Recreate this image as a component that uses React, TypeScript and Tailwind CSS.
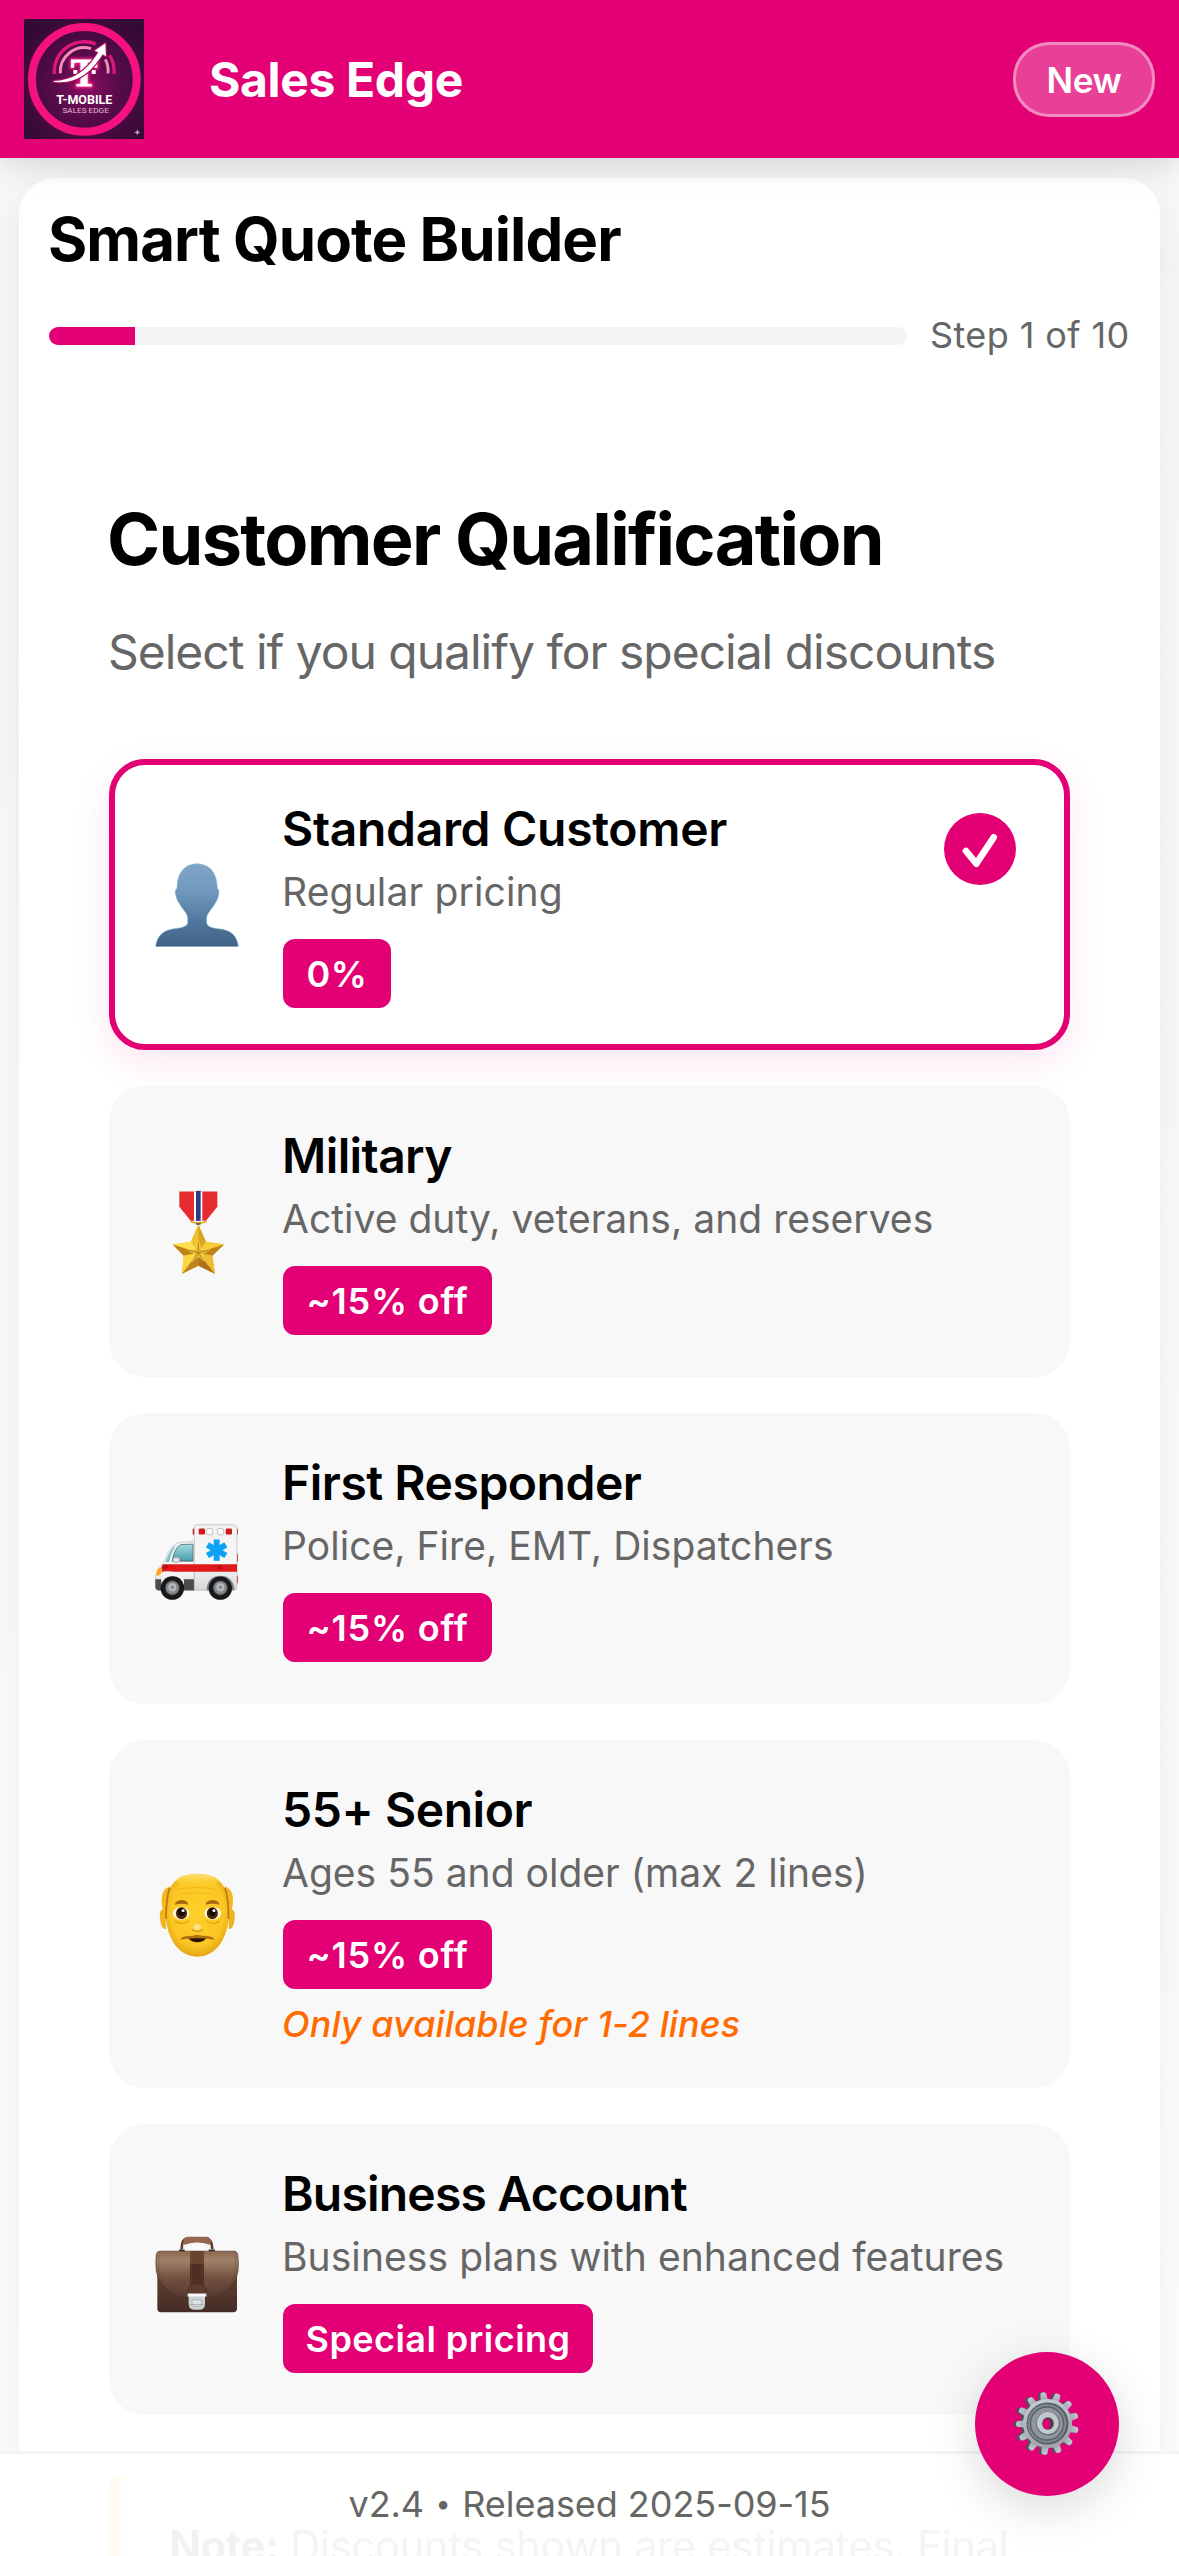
import type { ReactNode } from "react";

function Logo() {
  return (
    <svg viewBox="27 27 360 360" className="h-[120px] w-[120px] shrink-0">
      <defs>
        <radialGradient id="logoBg" cx="0.52" cy="0.56" r="0.62">
          <stop offset="0" stopColor="#8c0d62" />
          <stop offset="0.4" stopColor="#5a0b4b" />
          <stop offset="0.8" stopColor="#400a3c" />
          <stop offset="1" stopColor="#340a34" />
        </radialGradient>
        <filter id="glow" x="-40%" y="-40%" width="180%" height="180%">
          <feGaussianBlur stdDeviation="5" />
        </filter>
      </defs>
      <rect x="27" y="27" width="360" height="360" fill="url(#logoBg)" />
      <circle cx="208" cy="208" r="157" fill="none" stroke="#f5127f" strokeWidth="24" />
      <path d="M118 192 A90 90 0 0 1 242 102" fill="none" stroke="#e0177b" strokeWidth="10" />
      <path d="M136 190 A72 72 0 0 1 228 116" fill="none" stroke="#f78bb8" strokeWidth="9" />
      <path d="M284 136 A90 90 0 0 1 297 192" fill="none" stroke="#d8177b" strokeWidth="10" />
      <path d="M271 148 A72 72 0 0 1 279 190" fill="none" stroke="#f78bb8" strokeWidth="9" />
      <g fontFamily="'Liberation Serif', serif" fontWeight="700" fontSize="118" textAnchor="middle">
        <text x="207" y="227" fill="#ff1a8c" stroke="#ff1a8c" strokeWidth="12" filter="url(#glow)">T</text>
        <text x="207" y="227" fill="#ffffff" stroke="#ffffff" strokeWidth="3">T</text>
      </g>
      <rect x="175" y="180" width="12" height="12" fill="#fff" />
      <rect x="230" y="180" width="12" height="12" fill="#fff" />
      <path
        d="M116 213 C170 212 214 186 250 127 L239 122 L271 100 L273 139 L263 133 C224 194 180 224 116 215 Z"
        fill="#fff"
        stroke="#a80c5f"
        strokeWidth="7"
        paintOrder="stroke"
      />
      <text x="208" y="283" textAnchor="middle" fontFamily="Roboto, sans-serif" fontWeight="700" fontSize="38" textLength="168" lengthAdjust="spacingAndGlyphs" fill="#fff">
        T-MOBILE
      </text>
      <text x="212" y="310" textAnchor="middle" fontFamily="Roboto, sans-serif" fontSize="24" textLength="139" lengthAdjust="spacingAndGlyphs" fill="#e0bfd3">
        SALES EDGE
      </text>
      <path d="M367 359 L369 365 L375 367 L369 369 L367 375 L365 369 L359 367 L365 365 Z" fill="#c9b3c8" stroke="#c9b3c8" />
    </svg>
  );
}

function PersonIcon() {
  return (
    <svg viewBox="165 367.5 252 252" className="h-[84px] w-[84px]">
      <defs>
        <linearGradient id="person" x1="0" y1="0" x2="0" y2="1">
          <stop offset="0" stopColor="#7fa6c9" />
          <stop offset="0.35" stopColor="#6f98bc" />
          <stop offset="0.75" stopColor="#4d7299" />
          <stop offset="1" stopColor="#426387" />
        </linearGradient>
      </defs>
      <path
        d="M291 370 C327 370 352 396 352 444 C358 447 358 458 355 468 C352 478 349 484 345 489 C338 503 320 520 320 532 V546 C320 558 336 563 356 565 C392 568 411 585 415 617 H167 C171 585 191 568 226 564 C247 562 263 557 263 546 V532 C263 520 245 503 238 489 C234 484 231 478 228 468 C225 458 224 447 231 444 C231 396 255 370 291 370 Z"
        fill="url(#person)"
        stroke="#8cc3da"
        strokeWidth="1.5"
      />
      <path d="M168 616 H414" stroke="#36577c" strokeWidth="3" />
    </svg>
  );
}

function MedalIcon() {
  return (
    <svg viewBox="45 88.5 252 252" className="h-[84px] w-[84px]">
      <defs>
        <linearGradient id="medal" x1="0" y1="0" x2="1" y2="1">
          <stop offset="0" stopColor="#f6d02c" />
          <stop offset="1" stopColor="#d49a1c" />
        </linearGradient>
      </defs>
      <path d="M118 93 H232 V139 L198 181 H152 L118 139 Z" fill="#e62b2e" />
      <path d="M162 93 H187 V181 H162 Z" fill="#fff" />
      <path d="M168 91 H182 V181 H168 Z" fill="#2e3c82" />
      <path d="M150 180 Q175 189 201 180 L199 186 Q175 194 152 186 Z" fill="#e0aa2c" />
      <path d="M167 188 H183 L181 193 H169 Z" fill="#57452a" />
      <path d="M175 192 L198 244 L252 252 L217 286 L225 340 L175 316 L126 340 L131 286 L98 252 L153 244 Z" fill="url(#medal)" />
      <path d="M175 192 L153 244 L175 277 Z" fill="#eec42d" />
      <path d="M175 192 L198 244 L175 277 Z" fill="#d9a522" />
      <path d="M98 252 L153 244 L175 277 Z" fill="#ffe04a" />
      <path d="M98 252 L131 286 L175 277 Z" fill="#bd8418" />
      <path d="M252 252 L198 244 L175 277 Z" fill="#f5cd36" />
      <path d="M252 252 L217 286 L175 277 Z" fill="#c08419" />
      <path d="M126 340 L131 286 L175 277 Z" fill="#f9d73d" />
      <path d="M126 340 L175 316 V277 Z" fill="#be8420" />
      <path d="M225 340 L175 316 V277 Z" fill="#b0731c" />
      <path d="M225 340 L217 286 L175 277 Z" fill="#eebf30" />
      <path d="M175 240 L183 266 L208 268 L186 280 L192 302 L175 288 L158 302 L164 280 L143 268 L167 266 Z" fill="#e9b92b" stroke="#fbe36a" strokeWidth="2" />
      <path d="M175 243 V277 L206 268 M175 277 L190 300 M175 277 L160 300 M175 277 L145 268" stroke="#996515" strokeWidth="2" fill="none" />
    </svg>
  );
}

function Wheel({ cx }: { cx: number }) {
  return (
    <g>
      <circle cx={cx} cy="263" r="35" fill="#171819" />
      <circle cx={cx} cy="262" r="23" fill="#3b3d3f" />
      <circle cx={cx} cy="262" r="20" fill="#85888c" />
      <circle cx={cx} cy="260" r="12" fill="#b9bcc0" />
      <circle cx={cx} cy="260" r="6" fill="#8c8f93" />
    </g>
  );
}

function AmbulanceIcon() {
  return (
    <svg viewBox="45 49.5 252 252" className="h-[84px] w-[84px]">
      <defs>
        <linearGradient id="glass" x1="0" y1="0" x2="0" y2="1">
          <stop offset="0" stopColor="#a5dbe3" />
          <stop offset="1" stopColor="#4a9aa9" />
        </linearGradient>
        <linearGradient id="body" x1="0" y1="0" x2="0" y2="1">
          <stop offset="0" stopColor="#f3f3f3" />
          <stop offset="0.6" stopColor="#f7f7f8" />
          <stop offset="1" stopColor="#d6d7d9" />
        </linearGradient>
      </defs>
      <g fill="#d01d20">
        <rect x="158" y="84" width="8" height="19" rx="3" />
        <rect x="286" y="84" width="8" height="19" rx="3" />
        <rect x="286" y="160" width="8" height="24" rx="3" />
        <rect x="286" y="226" width="8" height="22" rx="3" />
      </g>
      <path d="M46 236 C48 208 60 194 72 186 C82 158 96 130 118 126 L163 123 V268 H60 Q46 268 46 256 Z" fill="url(#body)" stroke="#b8babc" strokeWidth="2" />
      <path d="M96 182 C101 155 112 133 126 132 L159 131 V182 Z" fill="url(#glass)" stroke="#3f5256" strokeWidth="2" />
      <path d="M76 186 C85 160 95 142 107 134 C98 150 91 166 88 184 Z" fill="#79c2cf" />
      <path d="M46 236 H163 V270 H58 Q46 270 46 258 Z" fill="#4b4c4e" />
      <path d="M163 82 Q163 73 173 73 H281 Q291 73 291 82 V258 Q291 269 280 269 H163 Z" fill="url(#body)" stroke="#b3b5b8" strokeWidth="2" />
      <path d="M200 262 Q206 226 242 226 Q275 226 283 262 V269 H200 Z" fill="#7e8084" />
      <path d="M68 191 H291 V214 H104 Q76 210 62 216 Q62 200 68 191 Z" fill="#e0181b" />
      <path d="M64 236 Q72 218 98 219 Q124 220 132 240 V258 H64 Z" fill="#f4f4f5" />
      <path d="M66 252 Q72 227 98 227 Q124 227 132 254 V262 H66 Z" fill="#3a3a3c" />
      <path d="M48 224 Q50 204 60 200 Q68 205 65 216 Q60 226 50 227 Z" fill="#ffa512" stroke="#e9e0c8" strokeWidth="2" />
      <ellipse cx="77" cy="199" rx="8" ry="6" fill="#b31114" />
      <rect x="232" y="196" width="15" height="10" rx="3" fill="#b31114" />
      <ellipse cx="109" cy="178" rx="11" ry="8" fill="#e2e3e5" stroke="#8d9093" strokeWidth="2" />
      <rect x="176" y="84" width="19" height="18" rx="4" fill="#cf1a1d" />
      <rect x="199" y="84" width="19" height="19" rx="5" fill="#fafafa" stroke="#a7a9ab" strokeWidth="2" />
      <rect x="232" y="84" width="19" height="19" rx="5" fill="#fafafa" stroke="#a7a9ab" strokeWidth="2" />
      <rect x="257" y="84" width="19" height="18" rx="4" fill="#cf1a1d" />
      <g fill="#0da2f6">
        <rect x="221" y="117" width="18" height="64" />
        <rect x="221" y="117" width="18" height="64" transform="rotate(60 230 149)" />
        <rect x="221" y="117" width="18" height="64" transform="rotate(-60 230 149)" />
      </g>
      <Wheel cx={97} />
      <Wheel cx={241} />
    </svg>
  );
}

function SeniorIcon() {
  return (
    <svg viewBox="38 66 212.4 252" preserveAspectRatio="none" className="h-[84px] w-[84px] overflow-visible">
      <defs>
        <radialGradient id="face" cx="0.5" cy="0.45" r="0.6">
          <stop offset="0" stopColor="#fdd02a" />
          <stop offset="0.7" stopColor="#fbc623" />
          <stop offset="1" stopColor="#dc9b10" />
        </radialGradient>
        <linearGradient id="shine" x1="0" y1="0" x2="0" y2="1">
          <stop offset="0" stopColor="#ffe27a" />
          <stop offset="1" stopColor="#fdd02a" stopOpacity="0" />
        </linearGradient>
      </defs>
      <path d="M64 178 Q49 176 50 196 Q52 240 66 237 Z" fill="#f0b31e" />
      <path d="M226 178 Q241 176 240 196 Q238 240 224 237 Z" fill="#f0b31e" />
      <path d="M145 71 C197 71 226 108 226 178 C226 258 196 320 145 320 C94 320 64 258 64 178 C64 108 93 71 145 71 Z" fill="url(#face)" />
      <ellipse cx="145" cy="92" rx="54" ry="20" fill="url(#shine)" />
      <path d="M75 109 C52 120 52 150 58 180 L66 208 C66 170 68 140 76 112 Z" fill="#f3b81d" />
      <path d="M215 109 C238 120 238 150 232 180 L224 208 C224 170 222 140 214 112 Z" fill="#f3b81d" />
      <path d="M75 114 C67 140 66 170 66 206 M215 114 C223 140 224 170 224 206" fill="none" stroke="#b87312" strokeWidth="4" />
      <path d="M98 118 Q145 107 192 118 M104 132 Q145 124 186 132" fill="none" stroke="#eab21c" strokeWidth="2" />
      <path d="M88 164 Q90 150 108 150 Q120 151 122 164 Q106 158 88 164 Z M166 164 Q168 151 182 150 Q199 150 201 164 Q184 158 166 164 Z" fill="#a8690f" />
      <ellipse cx="104" cy="190" rx="21" ry="19" fill="#fff8dc" />
      <ellipse cx="184" cy="190" rx="21" ry="19" fill="#fff8dc" />
      <ellipse cx="105" cy="190" rx="14" ry="18" fill="#4a2608" />
      <ellipse cx="183" cy="190" rx="14" ry="18" fill="#4a2608" />
      <ellipse cx="105" cy="186" rx="9" ry="12" fill="#160b04" />
      <ellipse cx="183" cy="186" rx="9" ry="12" fill="#160b04" />
      <circle cx="109" cy="182" r="4" fill="#fff" />
      <circle cx="187" cy="182" r="4" fill="#fff" />
      <path d="M88 213 Q106 228 124 212 M166 212 Q184 228 202 213" fill="none" stroke="#dfa017" strokeWidth="3" />
      <ellipse cx="145" cy="231" rx="10" ry="9" fill="#ffe27f" />
      <path d="M131 238 Q145 251 159 238" fill="none" stroke="#cf8e14" strokeWidth="3" />
      <path d="M122 264 H168 Q160 277 145 277 Q130 277 122 264 Z" fill="#2c1206" />
      <path d="M102 269 Q103 260 120 258 Q134 258 145 254 Q156 258 170 258 Q187 260 188 269 Q166 265 145 265 Q124 265 102 269 Z" fill="#b0700f" />
    </svg>
  );
}

function BriefcaseIcon() {
  return (
    <svg viewBox="45 82.5 252 252" className="h-[84px] w-[84px] overflow-visible">
      <defs>
        <linearGradient id="flap" x1="0" y1="0" x2="0" y2="1">
          <stop offset="0" stopColor="#8d6a52" />
          <stop offset="0.2" stopColor="#a08068" />
          <stop offset="0.6" stopColor="#70503f" />
          <stop offset="1" stopColor="#583a2f" />
        </linearGradient>
        <linearGradient id="base" x1="0" y1="0" x2="0" y2="1">
          <stop offset="0" stopColor="#6b4838" />
          <stop offset="1" stopColor="#452c26" />
        </linearGradient>
      </defs>
      <path d="M125 146 Q125 116 141 114 H199 Q216 116 217 146" fill="none" stroke="#5e3b2c" strokeWidth="8" />
      <path d="M131 124 Q131 109 145 109 H198 Q212 109 213 124 Q214 135 207 132 Q171 120 137 132 Q130 135 131 124 Z" fill="#96674e" />
      <path d="M117 147 H134 V153 H117 Z M206 147 H225 V153 H206 Z" fill="#3b2b25" />
      <path d="M52 180 H291 V324 Q291 335 280 335 H63 Q52 335 52 324 Z" fill="url(#base)" />
      <path d="M60 152 H282 Q292 152 293 162 Q297 185 294 212 C288 250 252 290 192 290 H150 C90 290 56 250 49 212 Q46 185 49 162 Q50 152 60 152 Z" fill="url(#flap)" stroke="#4d342b" strokeWidth="2" />
      <path d="M56 164 V214 C64 250 98 281 150 283 M286 164 V214 C278 250 246 281 196 283" fill="none" stroke="#4e3429" strokeWidth="1.5" strokeDasharray="4 3" />
      <path d="M150 152 H192 V254 H150 Z" fill="#4d3023" />
      <path d="M150 152 H192 V190 H150 Z" fill="#69432e" />
      <path d="M155 153 V250 M187 153 V250" stroke="#9c7560" strokeWidth="1.2" strokeDasharray="3 3" />
      <path d="M144 280 V270 Q147 249 171 249 Q196 249 199 270 V280 Z" fill="#5d3b2e" stroke="#3c251e" strokeWidth="1.5" />
      <path d="M146 286 H195 V311 Q194 328 176 328 H165 Q147 328 146 311 Z" fill="#ced2d3" />
      <path d="M143 279 H199 V288 H143 Z" fill="#f6f8f8" />
      <rect x="156" y="298" width="29" height="19" rx="5" fill="#dfe2e3" stroke="#999da0" strokeWidth="2" />
      <path d="M148 312 H194" stroke="#9fa4a6" strokeWidth="2" />
    </svg>
  );
}

const TEETH = Array.from({ length: 13 }, (_, i) => (i * 360) / 13);

function GearIcon() {
  return (
    <svg viewBox="0 0 144 144" className="h-[144px] w-[144px]">
      <defs>
        <linearGradient id="gear" x1="0" y1="0" x2="0.3" y2="1">
          <stop offset="0" stopColor="#c6d0da" />
          <stop offset="1" stopColor="#a3a3ac" />
        </linearGradient>
      </defs>
      {[
        { dx: -2.5, fill: "#4d5358" },
        { dx: 0, fill: "url(#gear)" },
      ].map((layer) => (
        <g key={layer.dx} transform={`translate(${layer.dx} 0)`} fill={layer.fill}>
          {TEETH.map((a) => (
            <path key={a} d="M68.6 50 L69.7 41 Q72.5 39 75.3 41 L76.4 50 Z" transform={`rotate(${a - 8} 72.5 71.5)`} />
          ))}
          <circle cx="72.5" cy="71.5" r="24.5" />
        </g>
      ))}
      <circle cx="72.5" cy="71.5" r="21" fill="#555c62" />
      <circle cx="72" cy="71.5" r="19.5" fill="#7e868c" />
      <circle cx="72" cy="71.5" r="16.5" fill="#8f979d" stroke="#5b6268" strokeWidth="1.4" />
      <circle cx="73" cy="71.5" r="12" fill="#666d73" />
      <circle cx="72.8" cy="71" r="11" fill="#c3c8d0" />
      <ellipse cx="73" cy="71.5" rx="5.8" ry="6.2" fill="#4b4045" />
      <ellipse cx="71.6" cy="72" rx="3.6" ry="5.2" fill="#e20074" />
    </svg>
  );
}

type Option = {
  icon: ReactNode;
  title: string;
  titleClass: string;
  desc: string;
  descClass: string;
  badge: string;
  badgeClass: string;
  note?: string;
  selected?: boolean;
};

const options: Option[] = [
  {
    icon: <PersonIcon />,
    title: "Standard Customer",
    titleClass: "tracking-[-0.32px]",
    desc: "Regular pricing",
    descClass: "tracking-[0.15px]",
    badge: "0%",
    badgeClass: "w-[108px] tracking-[0.5px]",
    selected: true,
  },
  {
    icon: <MedalIcon />,
    title: "Military",
    titleClass: "tracking-[-0.6px]",
    desc: "Active duty, veterans, and reserves",
    descClass: "tracking-[0.03px]",
    badge: "~15% off",
    badgeClass: "w-[209px] tracking-[0.8px]",
  },
  {
    icon: <AmbulanceIcon />,
    title: "First Responder",
    titleClass: "tracking-[-0.48px]",
    desc: "Police, Fire, EMT, Dispatchers",
    descClass: "tracking-[0.04px]",
    badge: "~15% off",
    badgeClass: "w-[209px] tracking-[0.8px]",
  },
  {
    icon: <SeniorIcon />,
    title: "55+ Senior",
    titleClass: "tracking-[-0.45px]",
    desc: "Ages 55 and older (max 2 lines)",
    descClass: "tracking-[0.02px]",
    badge: "~15% off",
    badgeClass: "w-[209px] tracking-[0.8px]",
    note: "Only available for 1-2 lines",
  },
  {
    icon: <BriefcaseIcon />,
    title: "Business Account",
    titleClass: "tracking-[-0.8px]",
    desc: "Business plans with enhanced features",
    descClass: "tracking-[0.07px]",
    badge: "Special pricing",
    badgeClass: "w-[310px] tracking-[0.45px]",
  },
];

function OptionCard({ option }: { option: Option }) {
  return (
    <div
      className={
        option.selected
          ? "relative flex items-center rounded-[36px] border-[6px] border-[#e20074] bg-white pl-10 shadow-[0_12px_36px_rgba(226,0,116,0.1)]"
          : "relative flex items-center rounded-[36px] border-[6px] border-[#f8f8f8] bg-[#f8f8f8] pl-10"
      }
    >
      <div className="w-[84px] shrink-0">{option.icon}</div>
      <div className={option.note ? "ml-11 pt-[34px] pb-[34px]" : "ml-11 pt-[34px] pb-9"}>
        <div className={`-ml-px text-[48px] leading-[60px] font-semibold text-black ${option.titleClass}`}>{option.title}</div>
        <div className={`mt-[9px] -ml-px text-[39px] leading-[48px] whitespace-nowrap text-[#666666] ${option.descClass}`}>{option.desc}</div>
        <div
          className={`mt-[23px] flex h-[69px] items-center justify-center rounded-xl bg-[#e20074] pt-px text-[36px] font-[570] whitespace-nowrap text-white ${option.badgeClass}`}
        >
          {option.badge}
        </div>
        {option.note && (
          <div className="mt-[11px] -ml-px text-[36px] leading-[48px] font-medium tracking-[0.08px] text-[#ff6b00] italic">{option.note}</div>
        )}
      </div>
      {option.selected && (
        <div className="absolute top-12 right-12 h-[72px] w-[72px] rounded-full bg-[#e20074]">
          <svg viewBox="132 219 216 216" className="h-[72px] w-[72px]">
            <path d="M198 333 L229 371 L281 292" fill="none" stroke="#fff" strokeWidth="20" strokeLinecap="round" strokeLinejoin="round" />
          </svg>
        </div>
      )}
    </div>
  );
}

export default function App() {
  return (
    <div className="relative h-[2556px] w-[1179px] overflow-hidden bg-linear-to-b from-[#f8f8f8] to-white font-['Inter',sans-serif]">
      <header className="relative z-10 flex h-[158px] items-center bg-[#e20074] px-6 shadow-[0_6px_30px_rgba(0,0,0,0.15)]">
        <Logo />
        <div className="ml-[65px] pt-[2px] text-[48px] leading-[60px] font-bold tracking-[-0.35px] text-white">Sales Edge</div>
        <button className="ml-auto flex h-[75px] w-[142px] items-center justify-center rounded-[36px] border-[3px] border-white/40 bg-white/25 pt-[2px] text-[35px] font-[570] tracking-[-0.4px] text-white">
          New
        </button>
      </header>

      <main className="mx-[19px] mt-5 h-[2600px] rounded-[36px] bg-white pt-[25px] shadow-[0_12px_48px_rgba(0,0,0,0.08)]">
        <div className="px-[30px]">
          <h1 className="-ml-px text-[60px] leading-[72px] font-bold tracking-[-0.93px] text-black">Smart Quote Builder</h1>
          <div className="mt-[34px] flex h-[54px] items-center">
            <div className="h-[18px] w-[858px] overflow-hidden rounded-full bg-[#f4f4f4]">
              <div className="h-full w-[10%] bg-[#e20074]" />
            </div>
            <div className="ml-[23px] pb-[2px] text-[36px] tracking-[0.4px] whitespace-nowrap text-[#666666]">Step 1 of 10</div>
          </div>
        </div>

        <section className="px-[90px]">
          <h2 className="mt-[131px] -ml-[2px] text-[72px] leading-[90px] font-bold tracking-[-1.7px] text-black">Customer Qualification</h2>
          <p className="mt-[38px] -ml-px text-[48px] leading-[60px] tracking-[-1.02px] whitespace-nowrap text-[#666666]">
            Select if you qualify for special discounts
          </p>
          <div className="mt-[77px] flex flex-col gap-9">
            {options.map((o) => (
              <OptionCard key={o.title} option={o} />
            ))}
          </div>
          <div className="mt-[60px] rounded-xl border-l-[12px] border-[#ff9800] bg-[#fff8e1] py-[39px] pl-12 text-[42px] leading-[63px] tracking-[-0.45px] text-[#333333]">
            <strong className="font-bold text-black">Note:</strong> Discounts shown are estimates. Final
          </div>
        </section>
      </main>

      <footer className="absolute inset-x-0 bottom-0 flex h-[105px] items-center justify-center border-t-[3px] border-[#f4f4f4] bg-white/95 pb-[2px] text-[36px] tracking-[-0.05px] whitespace-pre text-[#666666]">
        v2.4 <span className="w-[18px] text-center text-[27px]">•</span> Released 2025-09-15
      </footer>

      <button className="absolute right-[60px] bottom-[60px] h-[144px] w-[144px] rounded-full bg-[#e20074] shadow-[0_12px_48px_rgba(0,0,0,0.15)]">
        <GearIcon />
      </button>
    </div>
  );
}
